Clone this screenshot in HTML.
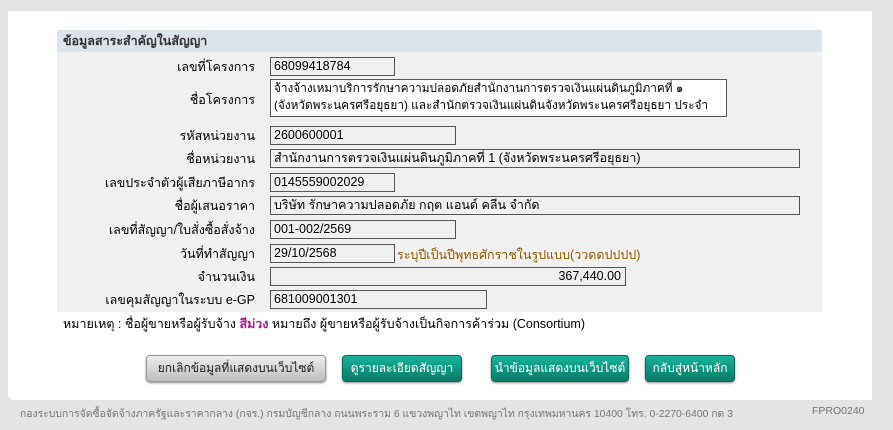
<!DOCTYPE html>
<html><head><meta charset="utf-8"><style>
body{margin:0;width:893px;height:430px;background:#e3e4e6;font-family:"Liberation Sans",Tahoma,sans-serif;font-size:12px;color:#000;position:relative;overflow:hidden}
.panel{position:absolute;left:8px;top:11px;width:864px;height:389px;background:#fff;border-radius:0 0 0 6px}
.box{position:absolute;left:57px;top:30px;width:765px;height:282px;background:#f0f0f0}
.hdr{position:absolute;left:57px;top:30px;width:765px;height:22px;background:#dde3ea;font-weight:bold;color:#333;line-height:22px;text-indent:6px;font-size:12.5px}
.l{position:absolute;right:638px;font-size:12.5px;text-align:right;white-space:nowrap}
.i{position:absolute;left:270px;height:19px;border:1px solid #555;background:#f0f0f0;box-sizing:border-box;line-height:17px;padding-left:3px;font-size:12.5px;white-space:nowrap;overflow:hidden}
.btn{position:absolute;top:355px;height:25px;border-radius:4px;line-height:25px;text-align:center;font-size:12px;white-space:nowrap;box-shadow:0 1px 2px #888}
.g{background:linear-gradient(#eee,#bdbdbd);color:#222;border:1px solid #999}
.t{background:linear-gradient(#19b39a,#0a7a66);color:#fff;border:1px solid #0a6a58}
</style></head><body>
<div class="panel"></div>
<div class="box"></div>
<div class="hdr">ข้อมูลสาระสำคัญในสัญญา</div>
<div class="l" style="top:57px">เลขที่โครงการ</div>
<div class="i" style="top:57px;width:125px">68099418784</div>
<div class="l" style="top:90px">ชื่อโครงการ</div>
<div class="i" style="top:79px;width:457px;height:38px;white-space:normal;line-height:17px;background:#fff;padding-right:16px;font-size:11.8px">จ้างจ้างเหมาบริการรักษาความปลอดภัยสำนักงานการตรวจเงินแผ่นดินภูมิภาคที่ ๑ (จังหวัดพระนครศรีอยุธยา) และสำนักตรวจเงินแผ่นดินจังหวัดพระนครศรีอยุธยา ประจำ</div>
<div class="l" style="top:126px">รหัสหน่วยงาน</div>
<div class="i" style="top:126px;width:186px">2600600001</div>
<div class="l" style="top:149px">ชื่อหน่วยงาน</div>
<div class="i" style="top:149px;width:530px">สำนักงานการตรวจเงินแผ่นดินภูมิภาคที่ 1 (จังหวัดพระนครศรีอยุธยา)</div>
<div class="l" style="top:173px">เลขประจำตัวผู้เสียภาษีอากร</div>
<div class="i" style="top:173px;width:125px">0145559002029</div>
<div class="l" style="top:196px">ชื่อผู้เสนอราคา</div>
<div class="i" style="top:196px;width:530px">บริษัท รักษาความปลอดภัย กฤต แอนด์ คลีน จำกัด</div>
<div class="l" style="top:220px">เลขที่สัญญา/ใบสั่งซื้อสั่งจ้าง</div>
<div class="i" style="top:220px;width:186px">001-002/2569</div>
<div class="l" style="top:244px">วันที่ทำสัญญา</div>
<div class="i" style="top:244px;width:125px">29/10/2568</div>
<div style="position:absolute;left:397px;top:245px;color:#8a5a00;font-size:12.5px">ระบุปีเป็นปีพุทธศักราชในรูปแบบ(ววดดปปปป)</div>
<div class="l" style="top:267px">จำนวนเงิน</div>
<div class="i" style="top:267px;width:356px;text-align:right;padding-right:4px">367,440.00</div>
<div class="l" style="top:290px">เลขคุมสัญญาในระบบ e-GP</div>
<div class="i" style="top:290px;width:217px">681009001301</div>
<div style="position:absolute;left:63px;top:314px;font-size:12.5px">หมายเหตุ : ชื่อผู้ขายหรือผู้รับจ้าง <b style="color:#a0228a">สีม่วง</b> หมายถึง ผู้ขายหรือผู้รับจ้างเป็นกิจการค้าร่วม (Consortium)</div>
<div class="btn g" style="left:146px;width:178px">ยกเลิกข้อมูลที่แสดงบนเว็บไซต์</div>
<div class="btn t" style="left:342px;width:118px">ดูรายละเอียดสัญญา</div>
<div class="btn t" style="left:491px;width:136px">นำข้อมูลแสดงบนเว็บไซต์</div>
<div class="btn t" style="left:645px;width:88px">กลับสู่หน้าหลัก</div>
<div style="position:absolute;left:20px;top:405px;color:#777;font-size:10.4px;white-space:nowrap">กองระบบการจัดซื้อจัดจ้างภาครัฐและราคากลาง (กจร.) กรมบัญชีกลาง ถนนพระราม 6 แขวงพญาไท เขตพญาไท กรุงเทพมหานคร 10400 โทร. 0-2270-6400 กด 3</div>
<div style="position:absolute;left:812px;top:405px;color:#777;font-size:10.5px">FPRO0240</div>
</body></html>
